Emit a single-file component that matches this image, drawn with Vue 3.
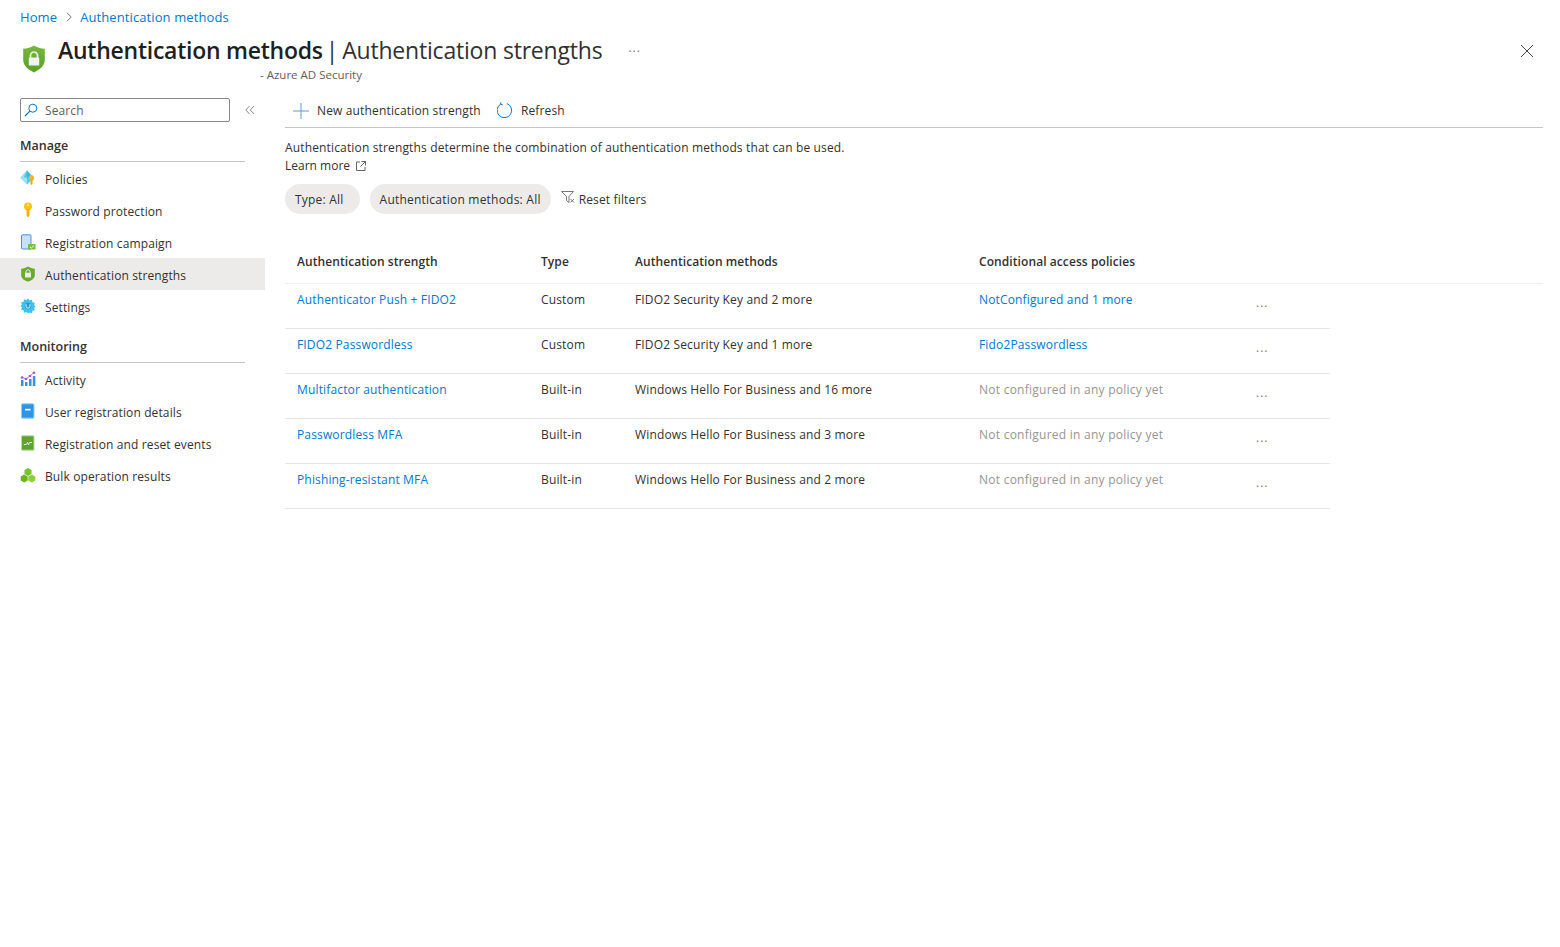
<script setup>
import { ref } from 'vue'

const manage = [
  { id: 'policies', label: 'Policies' },
  { id: 'key', label: 'Password protection' },
  { id: 'campaign', label: 'Registration campaign' },
  { id: 'shield', label: 'Authentication strengths', active: true },
  { id: 'gear', label: 'Settings' }
]

const monitoring = [
  { id: 'activity', label: 'Activity' },
  { id: 'details', label: 'User registration details' },
  { id: 'events', label: 'Registration and reset events' },
  { id: 'bulk', label: 'Bulk operation results' }
]

const sections = [
  { title: 'Manage', items: manage },
  { title: 'Monitoring', items: monitoring }
]

const none = 'Not configured in any policy yet'
const rows = ref([
  { name: 'Authenticator Push + FIDO2', type: 'Custom', methods: 'FIDO2 Security Key and 2 more', policy: 'NotConfigured and 1 more', linked: true },
  { name: 'FIDO2 Passwordless', type: 'Custom', methods: 'FIDO2 Security Key and 1 more', policy: 'Fido2Passwordless', linked: true },
  { name: 'Multifactor authentication', type: 'Built-in', methods: 'Windows Hello For Business and 16 more', policy: none },
  { name: 'Passwordless MFA', type: 'Built-in', methods: 'Windows Hello For Business and 3 more', policy: none },
  { name: 'Phishing-resistant MFA', type: 'Built-in', methods: 'Windows Hello For Business and 2 more', policy: none }
])
</script>

<template>
  <div class="page">
    <nav class="crumbs">
      <a>Home</a>
      <svg width="8" height="10" viewBox="0 0 8 10"><path d="M2 .8 6.200 5 2 9.200" fill="none" stroke="#777" /></svg>
      <a>Authentication methods</a>
    </nav>

    <header class="head">
      <svg class="logo" width="24" height="30" viewBox="0 0 24 30">
        <defs>
          <linearGradient id="shieldFill" x1="0" y1="0" x2="0" y2="1">
            <stop offset="0" stop-color="#76b83a" />
            <stop offset="1" stop-color="#58a02a" />
          </linearGradient>
        </defs>
        <path d="M12 1.500c3 2 6.500 3 10.800 3.200v11c0 6-4.800 9.700-10.800 12.800C6 25.400 1.200 21.700 1.200 15.700v-11C5.500 4.500 9 3.500 12 1.500Z" fill="url(#shieldFill)" />
        <path d="M8.500 14v-2.500a3.500 3.500 0 0 1 7 0V14" fill="none" stroke="#eee" stroke-width="1.700" />
        <rect x="6.800" y="13.500" width="10.400" height="8" rx=".6" fill="#f2f2f2" />
      </svg>
      <div class="titles">
        <h1><b>Authentication methods</b><span class="bar">|</span>Authentication strengths</h1>
        <p class="sub">- Azure AD Security</p>
      </div>
      <span class="more head-more">...</span>
      <svg class="close" width="14" height="14" viewBox="0 0 14 14"><path d="M1 1l12 12M13 1 1 13" stroke="#444" /></svg>
    </header>

    <div class="body">
      <aside class="side">
        <div class="search-row">
          <label class="search">
            <svg width="14" height="14" viewBox="0 0 14 14"><circle cx="8.800" cy="5.200" r="4" fill="none" stroke="#0078d4" /><path d="M5.800 8.200 1 13" stroke="#0078d4" stroke-width="1.200" /></svg>
            <span>Search</span>
          </label>
          <svg class="collapse" width="10" height="10" viewBox="0 0 10 10"><path d="M4.500 1 .8 5l3.700 4M9 1 5.300 5 9 9" fill="none" stroke="#8a8886" /></svg>
        </div>

        <section v-for="section in sections" :key="section.title" class="group">
          <h2>{{ section.title }}</h2>
          <a v-for="item in section.items" :key="item.id" class="item" :class="{ active: item.active }">
            <svg class="ico" width="16" height="16" viewBox="0 0 16 16">
              <template v-if="item.id === 'policies'">
                <path d="M7 .5 14 7.500 7 14.500 .5 7.500Z" fill="#50c7f0" />
                <path d="M7 .5v14L.5 7.500Z" fill="#9be3fa" />
                <path d="M3.500 7.500h8L7 .5Z" fill="#2aa8e0" opacity=".6" />
                <circle cx="11.500" cy="8" r="2.700" fill="#f4b81f" />
                <path d="M10.500 9h2v5l-1 1-1-1Z" fill="#eea80e" />
              </template>
              <template v-else-if="item.id === 'key'">
                <circle cx="8" cy="4.500" r="4" fill="#fcc419" />
                <path d="M6.600 7h2.800v6.500L8 15.500l-1.400-2Z" fill="#f4ab0c" />
                <circle cx="8" cy="3" r="1" fill="#fde68a" />
              </template>
              <template v-else-if="item.id === 'campaign'">
                <rect x="1.500" y=".8" width="9.500" height="14.200" rx="1" fill="#c4e2f9" stroke="#4a96dc" />
                <rect x="8" y="10" width="7.500" height="5.500" fill="#7ab93a" />
                <path d="M9.800 12.800l1.500 1.300L14 11.500" fill="none" stroke="#fff" />
              </template>
              <template v-else-if="item.id === 'shield'">
                <path d="M8 .5c2 1.300 4.200 2 6.800 2.200v6.500c0 3.200-3 5.100-6.800 6.400-3.800-1.300-6.800-3.200-6.800-6.400V2.700C3.800 2.500 6 1.800 8 .5Z" fill="#6aaa2e" />
                <path d="M6 7V5.800a2 2 0 0 1 4 0V7" fill="none" stroke="#e8efe0" />
                <rect x="5" y="6.800" width="6" height="4.700" fill="#e8efe0" />
              </template>
              <template v-else-if="item.id === 'gear'">
                <path d="M8 .5l1.500 2 2.400-.8.500 2.500 2.500.5-.8 2.400 1.400 1.400-1.400 1.500.8 2.300-2.500.5-.5 2.500-2.400-.8L8 15.500l-1.500-1.500-2.400.8-.5-2.500-2.500-.5.8-2.300L.5 8l1.400-1.400-.8-2.400 2.500-.5.500-2.500 2.400.8Z" fill="#3bc4ec" />
                <circle cx="8" cy="8" r="3.300" fill="#1e9fd0" />
                <path d="M6 6.200v2a2 2 0 0 0 4 0v-2" fill="none" stroke="#d2f1fb" />
              </template>
              <template v-else-if="item.id === 'activity'">
                <path d="M2 6 6 8l4-3 4-3.500" fill="none" stroke="#a27ad8" />
                <circle cx="2" cy="6.500" r="1.300" fill="#8d5fd3" />
                <circle cx="6" cy="8" r="1.300" fill="#8d5fd3" />
                <circle cx="10" cy="5" r="1.300" fill="#8d5fd3" />
                <circle cx="14" cy="1.800" r="1.300" fill="#8d5fd3" />
                <rect x="1" y="9" width="2.500" height="6" fill="#3e8ed8" />
                <rect x="5" y="11" width="2.500" height="4" fill="#3e8ed8" />
                <rect x="9" y="8" width="2.500" height="7" fill="#3e8ed8" />
                <rect x="12.800" y="5" width="2.500" height="10" fill="#3e8ed8" />
              </template>
              <template v-else-if="item.id === 'details'">
                <rect x="1.500" y=".8" width="12.500" height="14.400" rx="1.200" fill="#2d95e8" stroke="#9ccbf0" />
                <rect x="5" y="5.800" width="5.500" height="1.700" fill="#fff" />
              </template>
              <template v-else-if="item.id === 'events'">
                <rect x="1.500" y=".8" width="12.500" height="14.400" rx=".8" fill="#5fa32c" stroke="#bcd9a5" />
                <path d="M3.800 9.500h2.500l1.200-2 1 2.500 1-2.500h2.500" fill="none" stroke="#dff0cf" />
              </template>
              <template v-else>
                <path d="M8 1 11.500 3v4L8 9 4.500 7V3Z" fill="#78c22c" />
                <path d="M4.200 7.500 7.700 9.500v4l-3.500 2L.7 13.500v-4Z" fill="#6bb524" />
                <path d="M11.800 7.500 15.300 9.500v4l-3.500 2-3.500-2v-4Z" fill="#8bd13a" />
              </template>
            </svg>
            <span class="item-label">{{ item.label }}</span>
          </a>
        </section>
      </aside>

      <main class="main">
        <div class="toolbar">
          <button class="tool new">
            <svg width="16" height="16" viewBox="0 0 16 16"><path d="M8 0v16M0 8h16" stroke="#5b9bd5" /></svg>
            New authentication strength
          </button>
          <button class="tool">
            <svg width="16" height="17" viewBox="0 0 16 17"><path d="M9.800 1.500a7.300 7.300 0 1 1-6 .5M3.800 .3 3.700 2.300l2 .6" fill="none" stroke="#0078d4" /></svg>
            Refresh
          </button>
        </div>

        <p class="desc">Authentication strengths determine the combination of authentication methods that can be used.</p>
        <p class="learn">
          Learn more
          <svg width="10" height="10" viewBox="0 0 10 10"><path d="M4 1H.5v8.500H9V6M5.500.5h4v4M9.500.5 4.500 5.500" fill="none" stroke="#666" /></svg>
        </p>

        <div class="filters">
          <span class="pill">Type: All</span>
          <span class="pill">Authentication methods: All</span>
          <span class="reset">
            <svg width="14" height="13" viewBox="0 0 14 13"><path d="M.5.500h12L8 5.500v6L5.500 9.500v-4Z" fill="none" stroke="#777" /><path d="M9.500 8l3.500 3.500M13 8l-3.500 3.500" stroke="#777" /></svg>
            Reset filters
          </span>
        </div>

        <div class="table">
          <div class="thead">
            <span>Authentication strength</span>
            <span>Type</span>
            <span>Authentication methods</span>
            <span>Conditional access policies</span>
          </div>
          <div v-for="row in rows" :key="row.name" class="trow">
            <a>{{ row.name }}</a>
            <span>{{ row.type }}</span>
            <span>{{ row.methods }}</span>
            <a v-if="row.linked">{{ row.policy }}</a>
            <span v-else class="muted">{{ row.policy }}</span>
            <span class="more">...</span>
          </div>
        </div>
      </main>
    </div>
  </div>
</template>

<style>
body {
  background: #fff;
}
</style>

<style scoped>
.page {
  height: 947px;
  font-family: "Open Sans", "Liberation Sans", sans-serif;
  font-size: 12px;
  letter-spacing: .15px;
  color: #323130;
  overflow: hidden;
}
a {
  color: #0078d4;
}
.crumbs {
  display: flex;
  align-items: center;
  gap: 7.500px;
  height: 18px;
  padding: 8px 0 0 20px;
  font-size: 13px;
  letter-spacing: .1px;
}
.head {
  display: flex;
  align-items: flex-start;
  height: 72px;
  padding-left: 22px;
}
.logo {
  margin-top: 18px;
  flex: none;
}
.titles {
  margin-left: 12px;
  margin-top: 8px;
}
h1 {
  margin: 0;
  font-size: 23px;
  line-height: 32px;
  font-weight: 400;
  white-space: nowrap;
  letter-spacing: -.2px;
}
h1 b {
  font-weight: 600;
  letter-spacing: -.25px;
  color: #201f1e;
}
.bar {
  margin: 0 4px 0 3px;
}
.sub {
  margin: 1px 0 0 202px;
  font-size: 11.500px;
  line-height: 16px;
  letter-spacing: 0;
  color: #605e5c;
}
.more {
  color: #777;
  font-size: 12px;
  letter-spacing: 1px;
  line-height: 12px;
}
.head-more {
  margin: 16px 0 0 26px;
}
.close {
  margin: 18px 26px 0 auto;
}
.body {
  display: flex;
}
.side {
  width: 265px;
  flex: none;
  letter-spacing: .12px;
}
.search-row {
  display: flex;
  align-items: center;
  padding-left: 20px;
}
.search {
  display: flex;
  align-items: center;
  gap: 7px;
  box-sizing: border-box;
  width: 210px;
  height: 24px;
  padding-left: 3px;
  border: 1px solid #8a8886;
  border-radius: 2px;
  color: #605e5c;
}
.collapse {
  margin-left: 15px;
}
.group h2 {
  margin: 16px 20px 0;
  padding-bottom: 7px;
  height: 16px;
  border-bottom: 1px solid #c8c6c4;
  font-size: 12.500px;
  line-height: 16px;
  letter-spacing: 0;
  font-weight: 600;
}
.group + .group h2 {
  margin-top: 17px;
}
.item {
  display: flex;
  align-items: center;
  gap: 9px;
  height: 32px;
  padding-left: 20px;
  color: #323130;
}
.item-label {
  padding-top: 2px;
}
.item.active {
  background: #edebe9;
}
.ico {
  flex: none;
}
.main {
  flex: 1;
  min-width: 0;
  margin: 0 17px 0 20px;
}
.toolbar {
  display: flex;
  align-items: center;
  gap: 16px;
  height: 33px;
  margin-top: -4px;
  padding-left: 8px;
  border-bottom: 1px solid #c8c6c4;
}
.tool {
  display: flex;
  align-items: center;
  gap: 8px;
  padding: 0;
  border: 0;
  background: none;
  font: inherit;
  letter-spacing: inherit;
  color: #323130;
}
.desc,
.learn {
  margin: 0;
  line-height: 18px;
}
.desc {
  margin-top: 11px;
}
.learn {
  display: flex;
  align-items: center;
  gap: 6px;
  letter-spacing: 0;
}
.filters {
  display: flex;
  align-items: center;
  gap: 10px;
  margin-top: 9px;
}
.pill {
  padding: 0 10px;
  height: 30px;
  line-height: 31px;
  border-radius: 15px;
  background: #edebe9;
  letter-spacing: .22px;
}
.pill:first-child {
  padding-right: 16px;
}
.reset {
  display: flex;
  align-items: center;
  gap: 4px;
}
.reset svg {
  margin-top: -3px;
}
.table {
  margin-top: 26px;
}
.thead,
.trow {
  display: grid;
  grid-template-columns: 244px 94px 344px 277px auto;
  padding-left: 12px;
}
.thead {
  height: 43px;
  line-height: 43px;
  font-weight: 600;
  letter-spacing: .08px;
  border-bottom: 1px solid #f0efee;
}
.trow {
  box-sizing: border-box;
  width: 1045px;
  height: 45px;
  padding-top: 7px;
  border-bottom: 1px solid #e5e5e5;
  line-height: 17px;
}
.trow .more {
  line-height: 17px;
  padding-top: 3px;
}
.muted {
  color: #979593;
  letter-spacing: .25px;
}
</style>
